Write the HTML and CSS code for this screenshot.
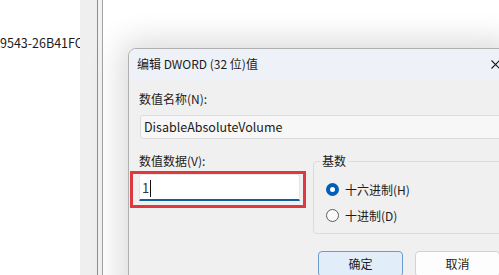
FILE: index.html
```html
<!DOCTYPE html>
<html lang="zh-CN">
<head>
    <meta charset="UTF-8">
    <meta name="viewport" content="width=device-width, initial-scale=1.0">
    <title>编辑 DWORD (32 位)值</title>
    <link rel="stylesheet" href="styles.css">
</head>
<body>
    <div class="desktop">
        <!-- registry key list behind the dialog -->
        <div class="key-list">
            <div class="key-row">9543-26B41FC</div>
        </div>
        <div class="splitter">
            <div class="splitter-grip"></div>
        </div>
        <div class="value-pane"></div>

        <!-- edit value dialog -->
        <div class="dialog">
            <div class="title-bar">
                <span class="title">编辑 DWORD (32 位)值</span>
                <svg class="close" width="9" height="9" viewBox="0 0 9 9">
                    <path d="M0.5 0.5 L8.5 8.5 M8.5 0.5 L0.5 8.5" stroke="#1b1b1b" stroke-width="1.1"/>
                </svg>
            </div>
            <div class="dialog-body">
                <div class="label">数值名称(N):</div>
                <div class="name-field">DisableAbsoluteVolume</div>

                <div class="data-row">
                    <div class="data-col">
                        <div class="label">数值数据(V):</div>
                        <div class="highlight">
                            <div class="data-field">1<span class="caret"></span></div>
                        </div>
                    </div>
                    <fieldset class="base-group">
                        <legend>基数</legend>
                        <div class="radio-row">
                            <span class="radio checked"></span>
                            <span>十六进制(H)</span>
                        </div>
                        <div class="radio-row">
                            <span class="radio"></span>
                            <span>十进制(D)</span>
                        </div>
                    </fieldset>
                </div>

                <div class="buttons">
                    <div class="btn primary">确定</div>
                    <div class="btn">取消</div>
                </div>
            </div>
        </div>
    </div>
</body>
</html>
```
FILE: styles.css
```css
body {
    margin: 0;
    font-family: "Noto Sans CJK SC", "Noto Sans", sans-serif;
    font-size: 12px;
    color: #1b1b1b;
}
.desktop {
    position: relative;
    display: flex;
    width: 499px;
    height: 275px;
    overflow: hidden;
    background: #fff;
}
.key-list {
    width: 80px;
    flex-shrink: 0;
    background: #fff;
    overflow: hidden;
}
.key-row {
    padding-top: 35px;
    line-height: 16px;
    white-space: nowrap;
    font-size: 12.5px;
}
.splitter {
    width: 17px;
    flex-shrink: 0;
    background: #efefef;
}
.splitter-grip {
    width: 4px;
    height: 100%;
    margin-left: 17px;
    background: #f2f2f2;
    border-left: 1px solid #8e8e8e;
    border-right: 1px solid #a4a4a4;
}
.value-pane {
    flex: 1;
    margin-left: 6px;
    background: #fff;
}
.dialog {
    position: absolute;
    left: 128px;
    top: 48px;
    width: 380px;
    height: 250px;
    background: #f0f0f0;
    border: 1px solid #b0b0b0;
    border-radius: 8px 8px 0 0;
    box-shadow: 0 0 30px 8px rgba(0, 0, 0, 0.14);
    overflow: hidden;
}
.title-bar {
    display: flex;
    align-items: center;
    justify-content: space-between;
    height: 30px;
    padding: 0 9px 0 8px;
    background: #eef2f8;
}
.title {
    line-height: 16px;
}
.close {
    margin-top: 1px;
}
.dialog-body {
    padding: 12px 0 0 10px;
}
.label {
    line-height: 16px;
}
.name-field {
    box-sizing: border-box;
    height: 24px;
    margin: 8px 0 0 1px;
    padding-left: 3px;
    line-height: 22px;
    background: #f7f7f7;
    border: 1px solid #dcdcdc;
    border-radius: 3px;
    font-size: 12.5px;
}
.data-row {
    display: grid;
    grid-template-columns: 168px 1fr;
    column-gap: 6px;
    margin-top: 14px;
}
.highlight {
    width: 161px;
    margin: 2px 0 0 -9px;
    padding: 0 3px 4px 6px;
    border: 3px solid #dc3a3f;
}
.data-field {
    box-sizing: border-box;
    height: 27px;
    padding: 4px 0 0 2px;
    line-height: 18px;
    background: #fff;
    border: 1px solid #e6e6e6;
    border-bottom: 2px solid #125f9e;
    border-radius: 3px 3px 0 0;
    font-size: 13px;
    color: #333;
}
.caret {
    display: inline-block;
    width: 1px;
    height: 17px;
    margin-left: 1px;
    vertical-align: -4px;
    background: #111;
}
.base-group {
    margin: 0;
    padding: 0 0 10px 12px;
    min-width: 0;
    border: 1px solid #dcdcdc;
    border-radius: 4px;
}
.base-group legend {
    margin-left: -6px;
    padding: 0 2px;
    line-height: 16px;
}
.radio-row {
    display: flex;
    align-items: center;
    gap: 6px;
    height: 16px;
    margin-top: 12px;
}
.radio-row + .radio-row {
    margin-top: 10px;
}
.radio {
    box-sizing: border-box;
    width: 13px;
    height: 13px;
    border: 1px solid #5c5c5c;
    border-radius: 50%;
    background: #fafafa;
}
.radio.checked {
    border: 4px solid #005fb8;
    background: #fff;
}
.buttons {
    display: flex;
    gap: 12px;
    margin: 17px 0 0 179px;
}
.btn {
    box-sizing: border-box;
    width: 85px;
    height: 26px;
    line-height: 24px;
    text-align: center;
    background: #fdfdfd;
    border: 1px solid #d2d2d2;
    border-radius: 4px;
}
.btn.primary {
    background: #e1edf8;
    border-color: #6c9ccf;
}
```
